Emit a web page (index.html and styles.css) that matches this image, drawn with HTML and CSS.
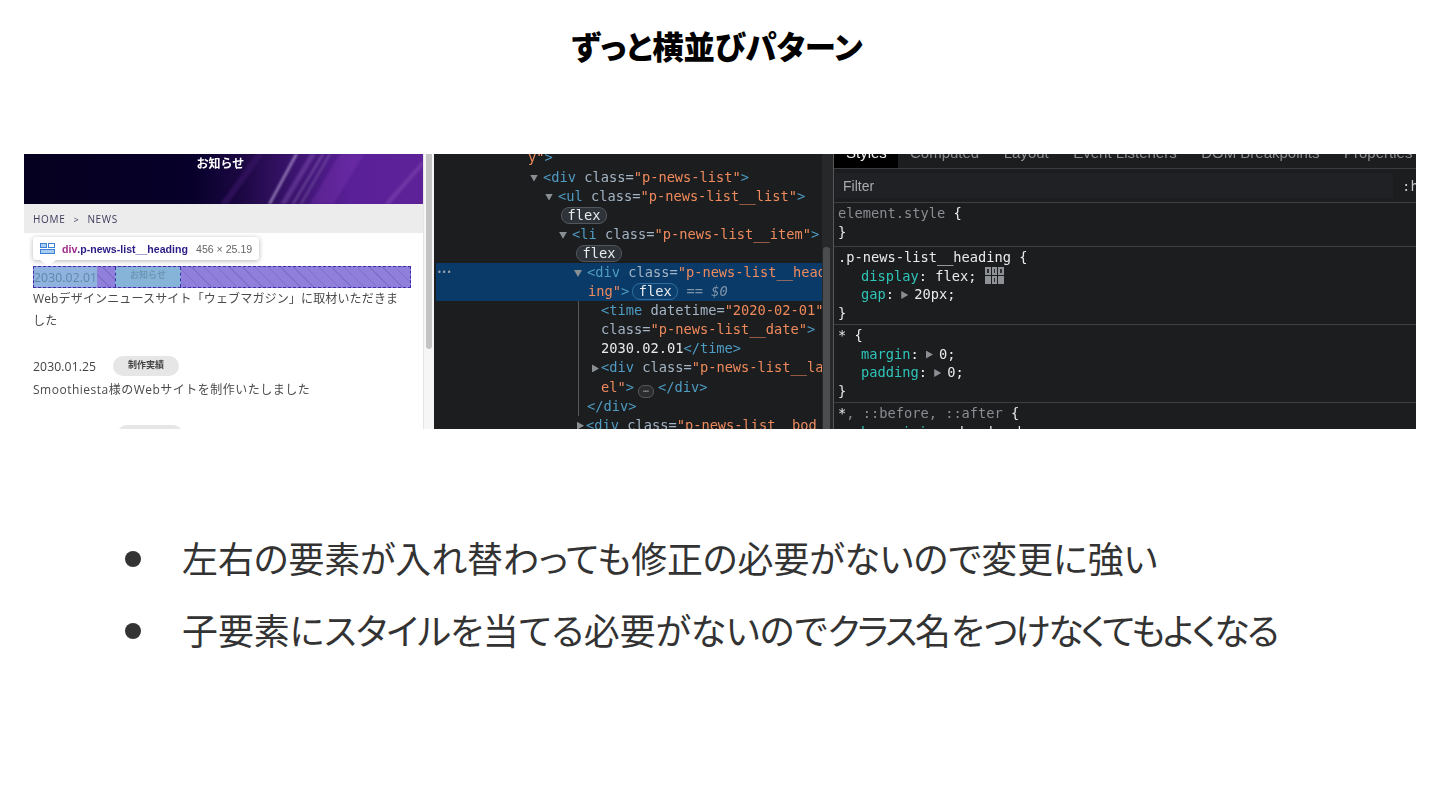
FILE: index.html
```html
<!DOCTYPE html>
<html lang="ja">
<head>
<meta charset="utf-8">
<title>ずっと横並びパターン</title>
<link rel="stylesheet" href="styles.css">
</head>
<body>
<main class="slide">
  <h1 class="title">ずっと横並びパターン</h1>
  <section class="shot">
    <div class="site">
      <div class="banner">
        <svg class="streaks" viewBox="0 0 399 50" preserveAspectRatio="none" aria-hidden="true">
          <polygon points="196,50 232,0 240,0 204,50" fill="#3a1668" opacity=".6"/>
          <polygon points="244,50 271,0 274,0 247,50" fill="#b9a2d8" opacity=".7"/>
          <polygon points="256,50 286,0 292,0 262,50" fill="#8a5ab8" opacity=".4"/>
          <polygon points="268,50 298,0 300,0 270,50" fill="#c4b2dc" opacity=".35"/>
          <polygon points="276,50 305,0 307,0 278,50" fill="#c4b2dc" opacity=".3"/>
          <polygon points="286,50 316,0 340,0 310,50" fill="#7a35b0" opacity=".4"/>
          <polygon points="360,50 399,6 399,12 366,50" fill="#9a68c8" opacity=".3"/>
        </svg>
        <span class="banner-title">お知らせ</span>
      </div>
      <div class="crumb">HOME<span class="crumb-sep">&gt;</span>NEWS</div>
      <div class="news">
        <div class="hl-row">
          <time class="hl-date">2030.02.01</time>
          <span class="hl-label">お知らせ</span>
        </div>
        <p class="news-text">Webデザインニュースサイト「ウェブマガジン」に取材いただきました</p>
        <div class="news-head news-head-first">
          <time class="news-date">2030.01.25</time>
          <span class="pill">制作実績</span>
        </div>
        <p class="news-text news-text-wide">Smoothiesta様のWebサイトを制作いたしました</p>
        <div class="news-head news-head-last">
          <span class="pill">&nbsp;</span>
        </div>
      </div>
      <div class="tooltip">
        <svg class="tt-icon" viewBox="0 0 15 11" aria-hidden="true">
          <rect x=".5" y=".5" width="6" height="4" fill="#a9cdf2" stroke="#3b82d6"/>
          <rect x="8.5" y=".5" width="6" height="4" fill="none" stroke="#3b82d6"/>
          <rect x=".5" y="6.5" width="14" height="4" fill="#a9cdf2" stroke="#3b82d6"/>
        </svg>
        <span class="tt-el">div</span><span class="tt-cl">.p-news-list__heading</span>
        <span class="tt-size">456 × 25.19</span>
      </div>
    </div>
    <div class="site-bar"><span class="site-thumb"></span></div>
    <div class="elements">
      <div class="tree">
        <div class="ln in-y"><span class="v">y"</span><span class="t">&gt;</span></div>
        <div class="ln in-1"><i class="tri"></i><span class="t">&lt;div</span> <span class="a">class=</span><span class="v">"p-news-list"</span><span class="t">&gt;</span></div>
        <div class="ln in-2"><i class="tri"></i><span class="t">&lt;ul</span> <span class="a">class=</span><span class="v">"p-news-list__list"</span><span class="t">&gt;</span></div>
        <div class="ln in-2b"><span class="badge">flex</span></div>
        <div class="ln in-3"><i class="tri"></i><span class="t">&lt;li</span> <span class="a">class=</span><span class="v">"p-news-list__item"</span><span class="t">&gt;</span></div>
        <div class="ln in-3b"><span class="badge">flex</span></div>
        <div class="sel">
          <div class="ln in-4"><span class="dots">•••</span><i class="tri tri-sel"></i><span class="t">&lt;div</span> <span class="a">class=</span><span class="v">"p-news-list__head</span></div>
          <div class="ln in-4b"><span class="v">ing"</span><span class="t">&gt;</span><span class="badge badge-sel">flex</span> <span class="eq">==</span> <em class="eq0">$0</em></div>
        </div>
        <div class="guide">
          <div class="ln in-5"><span class="t">&lt;time</span> <span class="a">datetime=</span><span class="v">"2020-02-01"</span></div>
          <div class="ln in-5"><span class="a">class=</span><span class="v">"p-news-list__date"</span><span class="t">&gt;</span></div>
          <div class="ln in-5"><span class="w">2030.02.01</span><span class="t">&lt;/time&gt;</span></div>
          <div class="ln in-5t"><i class="tri tri-r"></i><span class="t">&lt;div</span> <span class="a">class=</span><span class="v">"p-news-list__la</span></div>
          <div class="ln in-5"><span class="v">el"</span><span class="t">&gt;</span><span class="more">⋯</span><span class="t">&lt;/div&gt;</span></div>
          <div class="ln in-close"><span class="t">&lt;/div&gt;</span></div>
        </div>
        <div class="ln in-6"><i class="tri tri-r"></i><span class="t">&lt;div</span> <span class="a">class=</span><span class="v">"p-news-list__bod</span></div>
      </div>
      <div class="el-bar"><span class="el-thumb"></span></div>
    </div>
    <div class="styles">
      <div class="tabs">
        <span class="tab tab-on">Styles</span>
        <span class="tab">Computed</span>
        <span class="tab">Layout</span>
        <span class="tab">Event Listeners</span>
        <span class="tab">DOM Breakpoints</span>
        <span class="tab">Properties</span>
      </div>
      <div class="filter"><span class="filter-box">Filter</span><span class="filter-hov">:h</span></div>
      <div class="rule rule-a">
        <div class="sl"><span class="mut">element.style</span> {</div>
        <div class="sl">}</div>
      </div>
      <div class="rule rule-b">
        <div class="sl">.p-news-list__heading {</div>
        <div class="sl sl-in"><span class="p">display</span>: flex; <svg class="grid-ic" viewBox="0 0 19 17" aria-hidden="true"><path fill="#8e9296" d="M0 0h6v8H0zM7 0h5v8H7zM13 0h6v8h-6zM0 9h6v8H0zM7 9h5v8H7zM13 9h6v8h-6z"/><path fill="#2c2d30" d="M2 2h2v4H2zM9 2h1v4H9zM15 2h2v4h-2zM9 11h1v4H9z"/></svg></div>
        <div class="sl sl-in"><span class="p">gap</span>: <i class="tri tri-r tri-v"></i>20px;</div>
        <div class="sl">}</div>
      </div>
      <div class="rule rule-b">
        <div class="sl">* {</div>
        <div class="sl sl-in"><span class="p">margin</span>: <i class="tri tri-r tri-v"></i>0;</div>
        <div class="sl sl-in"><span class="p">padding</span>: <i class="tri tri-r tri-v"></i>0;</div>
        <div class="sl">}</div>
      </div>
      <div class="rule rule-b">
        <div class="sl">*<span class="mut">, ::before, ::after</span> {</div>
        <div class="sl sl-in"><span class="p">box-sizing</span>: border-box;</div>
      </div>
    </div>
  </section>
  <ul class="points">
    <li class="point"><span class="point-text">左右の要素が入れ替わっても修正の必要がないので変更に強い</span></li>
    <li class="point"><span class="point-text">子要素に<span class="tight-a">スタイルを</span>当てる必要がないので<span class="tight-b">クラス</span>名を<span class="tight-c">つけなくてもよくなる</span></span></li>
  </ul>
</main>
</body>
</html>
```
FILE: styles.css
```css
* { box-sizing: border-box; margin: 0; padding: 0; }
html, body { background: #fff; }
body { font-family: "Noto Sans CJK JP", sans-serif; overflow: hidden; }
.slide { width: 1440px; height: 810px; background: #fff; }

.title {
  height: 154px;
  padding: 25px 6px 0 0;
  text-align: center;
  font-size: 31.4px;
  line-height: 42px;
  font-weight: 900;
  font-feature-settings: "palt";
  color: #000;
}

.shot {
  display: flex;
  height: 275px;
  margin: 0 24px;
  overflow: hidden;
  background: #1c1d1f;
  filter: blur(.35px);
}

/* left: the web page */
.site {
  position: relative;
  flex: 0 0 399px;
  background: #fff;
  font-family: "Noto Sans CJK JP", sans-serif;
  color: #444;
}
.banner {
  position: relative;
  display: flex;
  justify-content: center;
  height: 50px;
  background: linear-gradient(90deg, #05001f 0%, #07002a 42%, #1d0844 55%, #3c1470 68%, #5a2098 82%, #5e2298 100%);
  overflow: hidden;
}
.streaks { position: absolute; inset: 0; width: 100%; height: 100%; filter: blur(.8px); }
.banner-title {
  position: relative;
  margin: 0 6px 0 0;
  font-size: 12px;
  line-height: 18px;
  font-weight: 700;
  color: #fff;
}
.crumb {
  height: 29px;
  padding-left: 9px;
  background: #ececec;
  font-family: "Open Sans", sans-serif;
  font-size: 10px;
  letter-spacing: .7px;
  line-height: 30px;
  color: #3f3a5c;
}
.crumb-sep { margin: 0 8px; font-size: 9px; }
.news { padding: 33px 12px 0 9px; }
.hl-row {
  display: flex;
  gap: 18px;
  height: 22px;
  border: 1px dashed #3c2fa8;
  background:
    repeating-linear-gradient(45deg, transparent 0 8px, #7f70c8 8px 9px),
    #9080dc;
}
.hl-date {
  flex: 0 0 63px;
  min-width: 0;
  background: #8fb3de;
  font-family: "Open Sans", sans-serif;
  font-size: 12.2px;
  line-height: 21px;
  color: #5f87a8;
  letter-spacing: .1px;
  white-space: nowrap;
}
.hl-label {
  flex: 0 0 66px;
  background: #86b3d8;
  border-left: 1px dashed #3c2fa8;
  border-right: 1px dashed #3c2fa8;
  text-align: center;
  font-size: 9px;
  font-weight: 700;
  line-height: 16px;
  color: #6f97b5;
}
.news-text {
  max-width: 368px;
  font-family: "Open Sans", "Noto Sans CJK JP", sans-serif;
  font-size: 12px;
  line-height: 22px;
  letter-spacing: .15px;
  color: #4a4a4a;
}
.news-text-wide { letter-spacing: .5px; }
.news-head { display: flex; align-items: center; gap: 16px; height: 20px; margin-top: 24px; }
.news-date { flex: 0 0 64px; font-family: "Open Sans", sans-serif; font-size: 12.2px; letter-spacing: .1px; color: #444; white-space: nowrap; }
.pill {
  display: block;
  width: 66px;
  height: 20px;
  border-radius: 10px;
  background: #e6e6e6;
  text-align: center;
  font-size: 9px;
  font-weight: 700;
  line-height: 18px;
  color: #444;
}
.news-head + .news-text { margin-top: 3px; }
.news-head-last { padding-left: 84px; }
.tooltip {
  position: absolute;
  left: 9px;
  top: 83px;
  display: flex;
  align-items: center;
  width: 226px;
  height: 23px;
  padding-left: 7px;
  background: #fff;
  border-radius: 3px;
  box-shadow: 0 1px 5px rgba(0, 0, 0, .3);
  font-family: "Liberation Sans", sans-serif;
  font-size: 10.6px;
  font-weight: 700;
  white-space: nowrap;
}
.tooltip::after {
  content: "";
  position: absolute;
  left: 7px;
  top: 23px;
  border: 8px solid transparent;
  border-top: 6px solid #fff;
  border-bottom: 0;
}
.tt-icon { flex: none; width: 15px; height: 11px; margin-right: 7px; }
.tt-el { color: #a12a8a; }
.tt-cl { color: #2a1c86; }
.tt-size { margin-left: 8px; font-weight: 400; color: #666; }

.site-bar {
  flex: 0 0 11px;
  background: #f6f6f6;
  border-left: 1px solid #e4e4e4;
  padding: 0 2px 0 2px;
}
.site-thumb { display: block; width: 6px; height: 195px; background: #c4c4c4; border-radius: 0 0 3px 3px; }

/* middle: elements tree */
.elements {
  display: flex;
  flex: 0 0 400px;
  overflow: hidden;
  background: #1c1d1f;
  font-family: "DejaVu Sans Mono", monospace;
  font-size: 13.7px;
  line-height: 19.13px;
  color: #9aa0a6;
}
.tree { position: relative; flex: 0 0 388px; min-width: 0; overflow: hidden; margin-top: -5.6px; }
.ln { position: relative; height: 19.1px; white-space: pre; }
.t { color: #4e9cc4; }
.a { color: #a3b4c4; }
.v { color: #ee8a5c; }
.w { color: #e8eaed; }
.in-y { padding-left: 94px; }
.in-1 { padding-left: 96px; }
.in-2 { padding-left: 111px; }
.in-2b { padding-left: 127px; }
.in-3 { padding-left: 125px; }
.in-3b { padding-left: 142px; }
.in-5 { padding-left: 167px; }
.in-5t { padding-left: 158px; }
.in-close { padding-left: 153px; }
.in-6 { padding-left: 143px; }
.sel { background: #0a3a68; margin-left: 2px; }
.sel .in-4 { padding-left: 138px; }
.sel .in-4b { padding-left: 152px; }
.guide { position: relative; }
.guide::before {
  content: "";
  position: absolute;
  left: 144px;
  top: 0;
  bottom: 0;
  width: 1px;
  background: #56595d;
}
.dots { position: absolute; left: 1px; top: 0; font-size: 8px; color: #9aa0a6; }
.tri {
  display: inline-block;
  width: 8px;
  height: 7px;
  margin-right: 5px;
  background: #8a8f94;
  clip-path: polygon(0 0, 100% 0, 50% 100%);
}
.tri-r { width: 7px; height: 8px; margin-right: 2px; clip-path: polygon(0 0, 100% 50%, 0 100%); }
.tri-v { margin: 0 6px 0 -1px; }
.badge {
  display: inline-block;
  width: 46px;
  height: 17px;
  border: 1px solid #50565c;
  border-radius: 8px;
  background: #2d3338;
  text-align: center;
  font-size: 13.7px;
  line-height: 14px;
  color: #e8eaed;
  vertical-align: 0;
}
.badge-sel { margin-left: 3px; border-color: #2e6d9e; background: #0c3f6e; }
.eq { color: #7f94a8; }
.eq0 { color: #7f94a8; font-style: italic; }
.more {
  display: inline-block;
  width: 16px;
  height: 13px;
  margin: 0 4px;
  border: 1px solid #55575a;
  border-radius: 6px;
  background: #2b2c2e;
  font-size: 9px;
  line-height: 10px;
  text-align: center;
  color: #a0a0a0;
  vertical-align: -2px;
}
.el-bar {
  flex: 0 0 12px;
  padding: 93px 3px 0 1px;
  background: #27282a;
  border-right: 1px solid #55585b;
}
.el-thumb { display: block; height: 190px; background: #4c4d4f; border-radius: 3px; }

/* right: styles */
.styles {
  flex: 1;
  min-width: 0;
  overflow: hidden;
  font-family: "DejaVu Sans Mono", monospace;
  font-size: 13.7px;
  color: #e8eaed;
  background: #1c1d1f;
}
.tabs {
  display: flex;
  align-items: flex-end;
  gap: 24.5px;
  height: 15px;
  overflow: hidden;
  border-bottom: 1px solid #3a3c3f;
  font-family: "Liberation Sans", sans-serif;
  font-size: 15px;
  color: #8a8d91;
  white-space: nowrap;
}
.tab { flex: none; height: 15px; line-height: 0; }
.tab-on { width: 64px; margin-right: -12.5px; padding-left: 12px; background: #000; color: #f0f0f0; }
.filter {
  display: flex;
  align-items: center;
  justify-content: space-between;
  height: 34px;
  padding: 0 0 0 1px;
  border-bottom: 1px solid #3e4043;
  font-family: "Liberation Sans", sans-serif;
  font-size: 14px;
}
.filter-box {
  flex: 0 0 558px;
  height: 25px;
  padding-left: 8px;
  background: #202124;
  line-height: 26px;
  color: #a8abaf;
}
.filter-hov { width: 14px; overflow: hidden; font-family: "DejaVu Sans Mono", monospace; color: #c8c8c8; }
.rule { padding-left: 4px; border-bottom: 1px solid #3e4043; }
.rule-a { height: 44px; padding-top: 1px; }
.rule-b { height: 78px; padding-top: 1px; }
.sl { height: 18.5px; line-height: 18.5px; white-space: pre; }
.sl-in { padding-left: 23px; }
.mut { color: #8a8d91; }
.p { color: #2fc4b8; }
.grid-ic { width: 19px; height: 17px; vertical-align: -3px; }

/* bullets */
.points { list-style: none; margin-top: 94px; padding-left: 125px; }
.point {
  display: flex;
  align-items: center;
  height: 72px;
  font-size: 35.9px;
  font-weight: 400;
  font-feature-settings: "palt";
  color: #333;
  white-space: nowrap;
}
.point::before {
  content: "";
  flex: 0 0 16px;
  height: 16px;
  margin-right: 41px;
  border-radius: 50%;
  background: #333;
}
.point-text { margin-top: -4px; }
.tight-a { letter-spacing: -.7px; }
.tight-b { letter-spacing: -2.5px; }
.tight-c { letter-spacing: -2.3px; }
```
